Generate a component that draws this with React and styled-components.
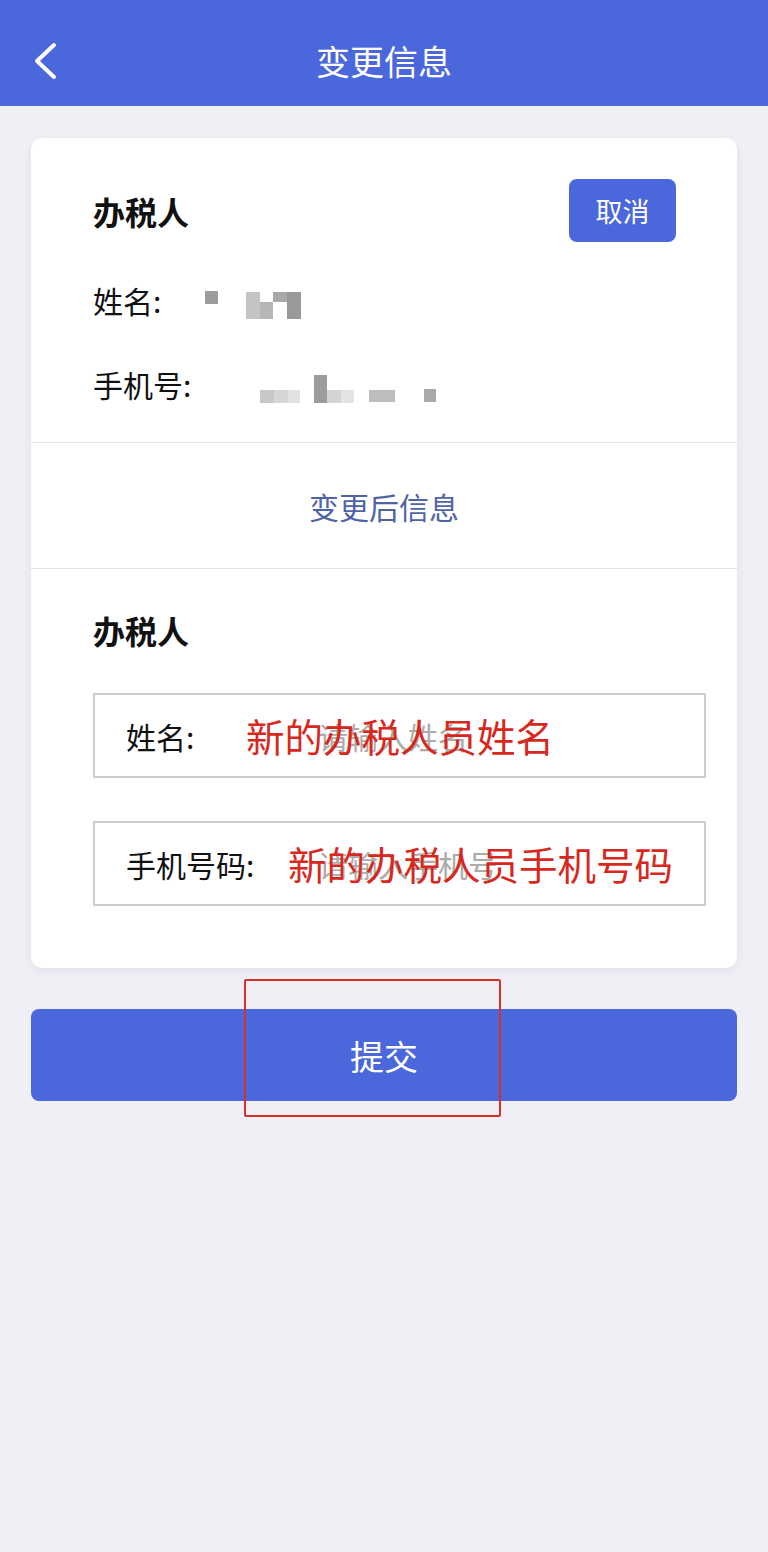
import React from 'react';
import styled, { createGlobalStyle } from 'styled-components';

const GlobalStyle = createGlobalStyle`
  body {
    margin: 0;
    background: #efeff5;
    font-family: "Noto Sans CJK SC", "Noto Sans", sans-serif;
  }
`;

const Page = styled.div`
  width: 768px;
  min-height: 1552px;
  background: #efeff5;
`;

const Header = styled.header`
  box-sizing: border-box;
  height: 106px;
  padding-top: 16px;
  background: #4a68dc;
  display: grid;
  grid-template-columns: 90px 1fr 90px;
  align-items: center;
`;

const Back = styled.div`
  display: flex;
  align-items: center;
  padding-left: 33px;
`;

const Title = styled.h1`
  margin: 0;
  text-align: center;
  color: #fff;
  font-size: 34px;
  font-weight: 400;
  line-height: 1;
`;

const Main = styled.main`
  padding: 32px 31px 0;
`;

const Card = styled.section`
  background: #fff;
  border-radius: 12px;
  box-shadow: 0 3px 10px rgba(40, 50, 90, 0.07);
`;

const Block = styled.div`
  padding: ${p => p.$pad};
`;

const TitleRow = styled.div`
  display: flex;
  align-items: center;
  justify-content: space-between;
  height: ${p => p.$h || 63}px;
  margin-bottom: ${p => p.$gap || 0}px;
`;

const Heading = styled.h2`
  margin: 0;
  font-size: 32px;
  font-weight: 700;
  color: #111;
  line-height: 40px;
`;

const SmallButton = styled.button`
  width: 107px;
  height: 63px;
  border: 0;
  border-radius: 8px;
  background: #4a68dc;
  color: #fff;
  font-family: inherit;
  font-size: 27px;
  padding: 0;
`;

const InfoRow = styled.div`
  display: flex;
  align-items: center;
  height: 84px;
  font-size: 30px;
  color: #111;
`;

const InfoLabel = styled.span`
  width: ${p => p.$w}px;
`;

const Mosaic = styled.span`
  display: flex;
  margin-top: 12px;
`;

const Divider = styled.div`
  height: 1px;
  background: #e2e2e6;
`;

const SubTitle = styled.div`
  height: 125px;
  display: flex;
  align-items: center;
  justify-content: center;
  font-size: 30px;
  color: #4f64a6;
`;

const Field = styled.div`
  position: relative;
  display: flex;
  align-items: center;
  height: 81px;
  border: 2px solid #cdcdd0;
  padding-left: 31px;
  font-size: 30px;
  color: #111;
  & + & {
    margin-top: 43px;
  }
`;

const FieldLabel = styled.span`
  width: 192px;
  flex-shrink: 0;
`;

const Placeholder = styled.span`
  color: #ababab;
`;

const Note = styled.span`
  position: absolute;
  left: ${p => p.$left}px;
  top: 50%;
  transform: translateY(-53%);
  font-size: 38.5px;
  color: #d8281e;
  white-space: nowrap;
  line-height: 1;
`;

const SubmitWrap = styled.div`
  position: relative;
  margin-top: 41px;
`;

const Submit = styled.button`
  width: 100%;
  height: 92px;
  border: 0;
  border-radius: 8px;
  background: #4a68dc;
  color: #fff;
  font-family: inherit;
  font-size: 34px;
  padding: 0;
`;

const Mark = styled.div`
  position: absolute;
  left: 213px;
  top: -30px;
  width: 253px;
  height: 134px;
  border: 2px solid #d6302a;
  border-radius: 2px;
  pointer-events: none;
`;

const NameMosaic = () => (
  <Mosaic>
    <svg width="110" height="30" viewBox="0 0 110 30">
      <rect x="0" y="0" width="13" height="13" fill="#9c9c9c" />
      <rect x="41" y="1" width="14" height="27" fill="#c4c4c4" />
      <rect x="55" y="11" width="13" height="17" fill="#b6b6b6" />
      <rect x="68" y="1" width="14" height="10" fill="#a8a8a8" />
      <rect x="82" y="1" width="14" height="27" fill="#999" />
    </svg>
  </Mosaic>
);

const PhoneMosaic = () => (
  <Mosaic>
    <svg width="200" height="30" viewBox="0 0 200 30">
      <rect x="0" y="15" width="14" height="13" fill="#c8c8c8" />
      <rect x="14" y="15" width="14" height="13" fill="#d6d6d6" />
      <rect x="28" y="15" width="12" height="13" fill="#e2e2e2" />
      <rect x="54" y="0" width="13" height="28" fill="#9c9c9c" />
      <rect x="67" y="15" width="14" height="13" fill="#d4d4d4" />
      <rect x="81" y="15" width="13" height="13" fill="#e4e4e4" />
      <rect x="109" y="15" width="26" height="12" fill="#bdbdbd" />
      <rect x="164" y="14" width="12" height="13" fill="#a9a9a9" />
    </svg>
  </Mosaic>
);

export default function App() {
  return (
    <Page>
      <GlobalStyle />
      <Header>
        <Back>
          <svg width="26" height="38" viewBox="0 0 26 38" fill="none">
            <path d="M21 3 L4 19 L21 35" stroke="#fff" strokeWidth="4" strokeLinecap="round" strokeLinejoin="round" />
          </svg>
        </Back>
        <Title>变更信息</Title>
        <span />
      </Header>
      <Main>
        <Card>
          <Block $pad="41px 61px 16px 62px">
            <TitleRow $gap={16}>
              <Heading>办税人</Heading>
              <SmallButton>取消</SmallButton>
            </TitleRow>
            <InfoRow>
              <InfoLabel $w={112}>姓名:</InfoLabel>
              <NameMosaic />
            </InfoRow>
            <InfoRow>
              <InfoLabel $w={167}>手机号:</InfoLabel>
              <PhoneMosaic />
            </InfoRow>
          </Block>
          <Divider />
          <SubTitle>变更后信息</SubTitle>
          <Divider />
          <Block $pad="41px 31px 62px 62px">
            <TitleRow $h={40} $gap={43}>
              <Heading>办税人</Heading>
            </TitleRow>
            <Field>
              <FieldLabel>姓名:</FieldLabel>
              <Placeholder>请输入姓名</Placeholder>
              <Note $left={151}>新的办税人员姓名</Note>
            </Field>
            <Field>
              <FieldLabel>手机号码:</FieldLabel>
              <Placeholder>请输入手机号</Placeholder>
              <Note $left={193}>新的办税人员手机号码</Note>
            </Field>
          </Block>
        </Card>
        <SubmitWrap>
          <Submit>提交</Submit>
          <Mark />
        </SubmitWrap>
      </Main>
    </Page>
  );
}
